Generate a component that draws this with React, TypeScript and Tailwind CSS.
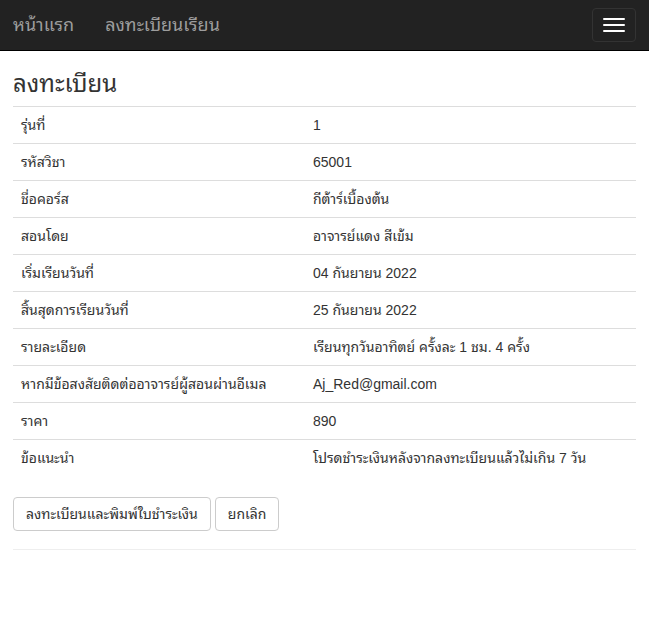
const rows: [string, string][] = [
  ['รุ่นที่', '1'],
  ['รหัสวิชา', '65001'],
  ['ชื่อคอร์ส', 'กีต้าร์เบื้องต้น'],
  ['สอนโดย', 'อาจารย์แดง สีเข้ม'],
  ['เริ่มเรียนวันที่', '04 กันยายน 2022'],
  ['สิ้นสุดการเรียนวันที่', '25 กันยายน 2022'],
  ['รายละเอียด', 'เรียนทุกวันอาทิตย์ ครั้งละ 1 ชม. 4 ครั้ง'],
  ['หากมีข้อสงสัยติดต่ออาจารย์ผู้สอนผ่านอีเมล', 'Aj_Red@gmail.com'],
  ['ราคา', '890'],
  ['ข้อแนะนำ', 'โปรดชำระเงินหลังจากลงทะเบียนแล้วไม่เกิน 7 วัน'],
];

export default function App() {
  return (
    <div className="min-h-[620px] bg-white font-['Liberation_Sans','Noto_Sans_Thai_Looped',Arial,sans-serif] text-[14px] leading-[20px] text-[#333]">
      <nav className="flex h-[51px] items-center justify-between border-b border-black bg-[#222] px-[13px]">
        <div className="flex items-center gap-[31px] text-[18px] text-[#9d9d9d]">
          <a href="#">หน้าแรก</a>
          <a href="#">ลงทะเบียนเรียน</a>
        </div>
        <button className="flex h-[34px] w-[44px] flex-col items-center justify-center gap-[4px] rounded-[4px] border border-[#333]">
          <span className="block h-[2px] w-[22px] rounded-[1px] bg-white" />
          <span className="block h-[2px] w-[22px] rounded-[1px] bg-white" />
          <span className="block h-[2px] w-[22px] rounded-[1px] bg-white" />
        </button>
      </nav>

      <div className="px-[13px]">
        <h3 className="mt-[20px] mb-[9px] text-[24px] leading-[26px] font-normal">ลงทะเบียน</h3>
        <table className="mb-[21px] w-full border-collapse">
          <tbody>
            {rows.map(([k, v]) => (
              <tr key={k} className="border-t border-[#ddd]">
                <td className="w-[292px] px-[8px] py-[8px]">{k}</td>
                <td className="px-[8px] py-[8px]">{v}</td>
              </tr>
            ))}
          </tbody>
        </table>
        <div className="flex gap-[4px]">
          <button className="rounded-[4px] border border-[#ccc] bg-white px-[12px] py-[6px]">
            ลงทะเบียนและพิมพ์ใบชำระเงิน
          </button>
          <button className="rounded-[4px] border border-[#ccc] bg-white px-[12px] py-[6px]">ยกเลิก</button>
        </div>
        <hr className="mt-[18px] border-t border-[#eee]" />
      </div>
    </div>
  );
}
